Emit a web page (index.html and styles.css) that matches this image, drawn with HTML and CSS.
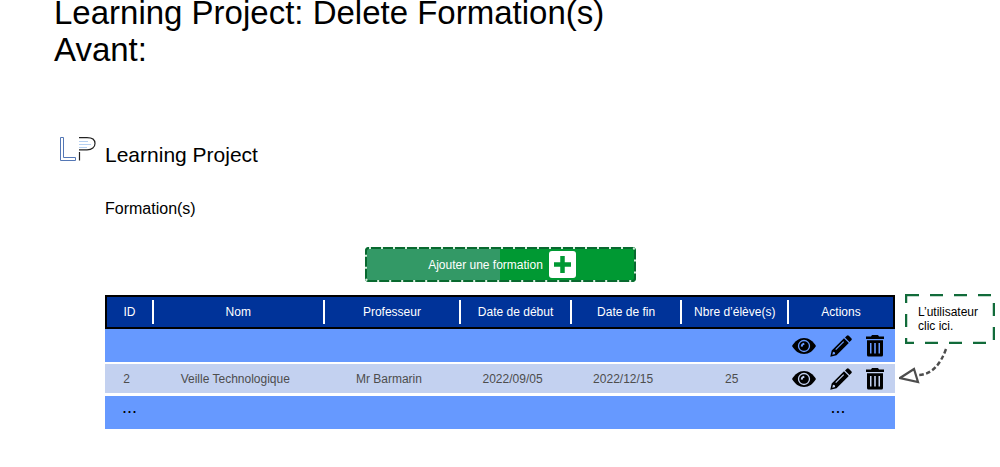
FILE: index.html
```html
<!DOCTYPE html>
<html lang="fr">
<head>
<meta charset="utf-8">
<meta name="viewport" content="width=device-width, initial-scale=1">
<title>Learning Project: Delete Formation(s)</title>
<link rel="stylesheet" href="styles.css">
</head>
<body>
<svg class="defs" aria-hidden="true">
  <symbol id="eye" viewBox="0 0 24 16">
    <path d="M0 8C3 3 7 0 12 0s9 3 12 8c-3 5-7 8-12 8S3 13 0 8z"/>
    <circle cx="12" cy="8" r="5.500" fill="none" stroke="var(--row)" stroke-width="1.300"/>
    <path d="M8.800 8.500q0-3.300 3.200-3.700l.6 1.800q-2 .3-2 2.200z" fill="var(--row)"/>
  </symbol>
  <symbol id="pencil" viewBox="0 0 22 22">
    <path d="M15 2.500l1.800-1.800q1-1 2 0l2.500 2.500q1 1 0 2L19.500 7z"/>
    <path fill-rule="evenodd" d="M14 3.200L18.800 8 6.500 20.300 .3 21.700 1.700 15.500zM3 16.800l-.7 2.900 2.900-.7-.4-1.800zM13.300 6.300l-8 8 .8.800 8-8z"/>
  </symbol>
  <symbol id="trash" viewBox="0 0 18 22">
    <path d="M6 0h6l1 1.500h5V4H0V1.500h5z"/>
    <path fill-rule="evenodd" d="M1 5.200h16V20q0 1.500-1.500 1.500h-13Q1 21.500 1 20zM4 8v10.500h1.500V8zm4.200 0v10.500h1.600V8zm4.300 0v10.500H14V8z"/>
  </symbol>
</svg>

<h1 class="title">Learning Project: Delete Formation(s)<br>Avant:</h1>

<main class="page">
  <svg class="logo" viewBox="0 0 37 26" aria-hidden="true">
    <path d="M1.500.5h3v20h12v3h-15z" fill="none" stroke="#5477b5"/>
    <path d="M20 4.500h9M20 7.500h12M20 10.500h8" stroke="#b5d0f2"/>
    <path d="M20 .7h8c5 0 8 2.200 8 5.800s-3 6.300-8 6.300h-8M20.500 15v8.500" fill="none" stroke="#222" stroke-width="1.200"/>
  </svg>
  <p class="brand">Learning Project</p>

  <h2 class="section">Formation(s)</h2>

  <button class="add" type="button">
    <span>Ajouter une formation</span>
    <svg class="plus" viewBox="0 0 27 27" aria-hidden="true">
      <rect width="27" height="27" rx="3" fill="#fff"/>
      <path d="M13.500 5v17M5 13.500h17" stroke="#009933" stroke-width="4.500"/>
    </svg>
    <svg class="dashes" aria-hidden="true"><rect x="1" y="1" width="269" height="33" rx="3" fill="none" stroke="#08692f" stroke-width="2"/><rect x="1" y="1" width="269" height="33" rx="3" fill="none" stroke="#d5f0dd" stroke-width="2" stroke-dasharray="2 10"/></svg>
  </button>

  <table class="courses">
    <colgroup>
      <col class="c-id"><col class="c-name"><col class="c-prof"><col class="c-date"><col class="c-date"><col class="c-count"><col class="c-actions">
    </colgroup>
    <thead>
      <tr>
        <th scope="col"><span>ID</span></th>
        <th scope="col"><span>Nom</span></th>
        <th scope="col"><span>Professeur</span></th>
        <th scope="col"><span>Date de début</span></th>
        <th scope="col"><span>Date de fin</span></th>
        <th scope="col"><span>Nbre d’élève(s)</span></th>
        <th scope="col"><span>Actions</span></th>
      </tr>
    </thead>
    <tbody>
      <tr>
        <td></td><td></td><td></td><td></td><td></td><td></td>
        <td>
          <div class="actions">
            <button type="button" aria-label="Voir"><svg class="eye"><use href="#eye"/></svg></button>
            <button type="button" aria-label="Modifier"><svg class="pencil"><use href="#pencil"/></svg></button>
            <button type="button" aria-label="Supprimer"><svg class="trash"><use href="#trash"/></svg></button>
          </div>
        </td>
      </tr>
      <tr class="light">
        <td>2</td><td>Veille Technologique</td><td>Mr Barmarin</td><td>2022/09/05</td><td>2022/12/15</td><td>25</td>
        <td>
          <div class="actions">
            <button type="button" aria-label="Voir"><svg class="eye"><use href="#eye"/></svg></button>
            <button type="button" aria-label="Modifier"><svg class="pencil"><use href="#pencil"/></svg></button>
            <button type="button" aria-label="Supprimer"><svg class="trash"><use href="#trash"/></svg></button>
          </div>
        </td>
      </tr>
      <tr class="more">
        <td>...</td><td></td><td></td><td></td><td></td><td></td><td>...</td>
      </tr>
    </tbody>
  </table>

  <aside class="callout">
    <div class="note">
      <svg class="outline" aria-hidden="true"><rect x="1" y="1" width="88" height="48" fill="none" stroke="#116b3a" stroke-width="2.500" stroke-dasharray="13 11"/></svg>
      <p>L’utilisateur clic ici.</p>
    </div>
    <svg class="arrow" viewBox="0 0 52 40" aria-hidden="true">
      <path d="M47 5Q38 30 20 31" fill="none" stroke="#4d4d4d" stroke-width="2.400" stroke-dasharray="4.500 2.500"/>
      <path d="M1 34L15 25l4 13z" fill="#fff" stroke="#4d4d4d" stroke-width="2.200"/>
    </svg>
  </aside>
</main>
</body>
</html>
```
FILE: styles.css
```css
* { box-sizing: border-box; }

body {
  margin: 0;
  background: #fff;
  color: #000;
  font-family: "Liberation Sans", Arial, sans-serif;
  font-size: 12px;
}

.defs { position: absolute; width: 0; height: 0; }

.title {
  margin: -6px 0 0;
  padding-left: 54px;
  font-size: 33px;
  line-height: 37px;
  font-weight: 400;
}

.page {
  display: grid;
  grid-template-columns: 105px 1fr 105px;
  align-items: start;
  padding-top: 69px;
}

.logo { width: 37px; height: 26px; justify-self: end; margin-right: 9px; }

.brand {
  grid-column: 2 / 4;
  margin: 0;
  padding-top: 6px;
  font-size: 21px;
  line-height: 24px;
}

.section {
  grid-column: 2 / 4;
  margin: 32px 0 28px;
  font-size: 16px;
  line-height: 20px;
  font-weight: 400;
}

.add {
  grid-column: 2;
  justify-self: center;
  position: relative;
  display: flex;
  align-items: center;
  justify-content: center;
  gap: 6px;
  width: 271px;
  height: 35px;
  padding: 0 0 0 4px;
  border: 0;
  border-radius: 4px;
  background: linear-gradient(90deg, #339966 50%, #009933 50%);
  color: #fff;
  font: inherit;
}

.plus { width: 27px; height: 27px; }
.dashes { position: absolute; inset: 0; width: 100%; height: 100%; }

.courses {
  grid-column: 2;
  width: 100%;
  margin-top: 13px;
  border-spacing: 0;
  table-layout: fixed;
  text-align: center;
}

.c-id { width: 6.2%; }
.c-name { width: 21.6%; }
.c-prof { width: 17.3%; }
.c-date { width: 14%; }
.c-count { width: 13.5%; }
.c-actions { width: 13.4%; }

th {
  height: 34px;
  padding: 0;
  border: solid #000;
  border-width: 2px 0;
  background: #003399;
  color: #fff;
  font-weight: 400;
}
th:first-child { border-left-width: 2px; }
th:last-child { border-right-width: 2px; }
th span {
  display: block;
  border-right: 2px solid #fff;
  line-height: 24px;
}
th:last-child span { border: 0; }

td {
  height: 33px;
  padding: 0 8px 0 0;
  background: #6699ff;
}
td:first-child { padding-right: 6px; }
tbody tr { --row: #6699ff; }
.light { --row: #c3d1f0; }
.light td {
  height: 34px;
  border: solid #fff;
  border-width: 2px 0 3px;
  background: #c3d1f0;
  color: #4d4d4d;
}
.more td { padding-bottom: 12px; font-size: 18px; line-height: 18px; }
.more td:first-child { padding-right: 0; }

.actions {
  display: flex;
  align-items: center;
  justify-content: center;
  gap: 14px;
}
.actions button {
  display: flex;
  padding: 0;
  border: 0;
  background: none;
}
.eye { width: 24px; height: 16px; }
.pencil { width: 22px; height: 22px; }
.trash { width: 18px; height: 22px; }

.callout { grid-column: 3; padding: 12px 0 0 4px; }
.note { position: relative; width: 90px; height: 50px; margin-left: 6px; padding: 11px 0 0 13px; }
.note p { margin: 0; line-height: 14px; }
.outline { position: absolute; inset: 0; width: 100%; height: 100%; }
.arrow { display: block; width: 52px; height: 40px; }
```
